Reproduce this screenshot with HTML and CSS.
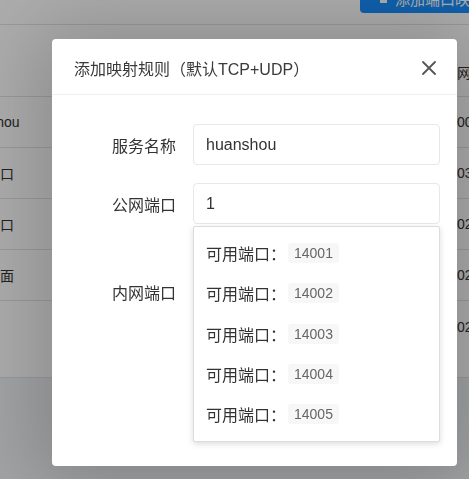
FILE: index.html
```html
<!DOCTYPE html>
<html lang="zh-CN">
<head>
<meta charset="utf-8">
<title>添加映射规则</title>
<link rel="stylesheet" href="styles.css">
</head>
<body>
<div class="page">
  <div class="topbar">
    <div class="btn-primary"><span class="btn-icon"></span>添加端口映射</div>
  </div>
  <div class="table">
    <div class="row row-head"><div class="cell-left"></div><div class="cell-right head-text">公网端口</div></div>
    <div class="row"><div class="cell-left">huanshou</div><div class="cell-right">0001</div></div>
    <div class="row"><div class="cell-left">远程端口</div><div class="cell-right">0389</div></div>
    <div class="row"><div class="cell-left">测试端口</div><div class="cell-right">0222</div></div>
    <div class="row"><div class="cell-left">远程桌面</div><div class="cell-right">0233</div></div>
    <div class="row row-tall"><div class="cell-left"></div><div class="cell-right">0255</div></div>
  </div>
  <div class="page-foot"></div>
</div>

<div class="mask"></div>

<div class="modal">
  <div class="modal-header">
    <div class="modal-title">添加映射规则（默认TCP+UDP）</div>
    <svg class="close" width="14" height="14" viewBox="0 0 14 14"><path d="M1 1 L13 13 M13 1 L1 13" stroke="#555" stroke-width="1.8" stroke-linecap="round" fill="none"/></svg>
  </div>
  <div class="modal-body">
    <div class="form-row">
      <label class="form-label">服务名称</label>
      <div class="form-field"><div class="input">huanshou</div></div>
    </div>
    <div class="form-row">
      <label class="form-label">公网端口</label>
      <div class="form-field">
        <div class="input">1</div>
        <div class="dropdown">
          <div class="option"><span class="opt-label">可用端口：</span><span class="tag">14001</span></div>
          <div class="option"><span class="opt-label">可用端口：</span><span class="tag">14002</span></div>
          <div class="option"><span class="opt-label">可用端口：</span><span class="tag">14003</span></div>
          <div class="option"><span class="opt-label">可用端口：</span><span class="tag">14004</span></div>
          <div class="option"><span class="opt-label">可用端口：</span><span class="tag">14005</span></div>
        </div>
      </div>
    </div>
    <div class="form-row form-row-third">
      <label class="form-label">内网端口</label>
      <div class="form-field"><div class="input"></div></div>
    </div>
  </div>
</div>
</body>
</html>
```

FILE: styles.css
```css
html, body {
  margin: 0;
  padding: 0;
  width: 469px;
  height: 479px;
  overflow: hidden;
  font-family: "Liberation Sans", "Noto Sans CJK SC", sans-serif;
  color: #333;
  background: #f0f2f5;
}

.page {
  width: 469px;
  height: 479px;
  overflow: hidden;
  background: #fff;
  display: flex;
  flex-direction: column;
}

.topbar {
  height: 24px;
  flex: none;
  border-bottom: 1px solid #e4e4e4;
  display: flex;
  justify-content: flex-end;
}

.btn-primary {
  margin-top: -17px;
  margin-right: -40px;
  height: 30px;
  width: 149px;
  box-sizing: border-box;
  padding-left: 20px;
  background: #1890ff;
  border-radius: 4px;
  color: #fff;
  font-size: 15px;
  display: flex;
  align-items: center;
  white-space: nowrap;
}

.btn-icon {
  width: 7px;
  height: 7px;
  background: #fff;
  margin-right: 8px;
  margin-top: 3px;
}

.table {
  margin-left: -42px;
  font-size: 14px;
  color: #333;
}

.row {
  display: flex;
  align-items: center;
  height: 50px;
  border-bottom: 1px solid #e4e4e4;
  white-space: nowrap;
}

.row-head {
  height: 72px;
  padding-top: 22px;
  box-sizing: border-box;
}

.row-tall {
  height: 77px;
  align-items: flex-start;
  padding-top: 18px;
  box-sizing: border-box;
}

.cell-left {
  width: 499px;
  flex: none;
}

.cell-right {
  flex: none;
}

.head-text {
  margin-left: -14px;
}

.page-foot {
  flex: 1;
  background: #f0f2f5;
}

.mask {
  position: fixed;
  inset: 0;
  background: rgba(0, 0, 0, 0.32);
}

.modal {
  position: absolute;
  left: 52px;
  top: 39px;
  width: 405px;
  height: 427px;
  background: #fff;
  border-radius: 4px;
  box-shadow: 0 4px 80px 16px rgba(0, 0, 0, 0.2);
}

.modal-header {
  height: 56px;
  box-sizing: border-box;
  border-bottom: 1px solid #efefef;
  display: flex;
  align-items: center;
  justify-content: space-between;
  padding: 2px 21px 0 22px;
}

.modal-title {
  font-size: 16px;
  color: #3a3a3a;
}

.close {
  display: block;
}

.modal-body {
  padding: 29px 17px 0 0;
}

.form-row {
  display: flex;
  align-items: center;
  margin-bottom: 18px;
}

.form-row-third {
  margin-top: 47px;
}

.form-label {
  width: 124px;
  flex: none;
  text-align: right;
  margin-right: 17px;
  font-size: 16px;
  color: #333;
}

.form-field {
  flex: 1;
  position: relative;
}

.input {
  height: 41px;
  box-sizing: border-box;
  border: 1px solid #e8e8e8;
  border-radius: 4px;
  padding: 0 12px;
  display: flex;
  align-items: center;
  font-size: 16px;
  color: #333;
}

.dropdown {
  position: absolute;
  z-index: 2;
  left: 0;
  right: 0;
  top: calc(100% + 2px);
  background: #fff;
  border: 1px solid #dcdcdc;
  border-radius: 2px;
  box-shadow: 0 2px 6px rgba(0, 0, 0, 0.14);
  padding: 6px 0 7px;
}

.option {
  height: 40.3px;
  display: flex;
  align-items: center;
  padding-left: 12px;
}

.opt-label {
  font-size: 16px;
  color: #333;
  width: 82px;
}

.tag {
  background: #f7f7f7;
  border-radius: 3px;
  color: #666;
  font-size: 14px;
  height: 20px;
  padding: 0 6px;
  display: flex;
  align-items: center;
}
```
